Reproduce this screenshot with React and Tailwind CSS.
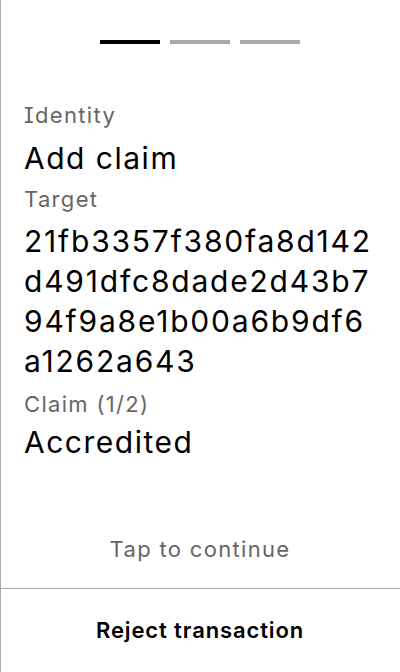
const steps = [true, false, false]

const hashLines = ['21fb3357f380fa8d142', 'd491dfc8dade2d43b7', '94f9a8e1b00a6b9df6', 'a1262a643']

export default function App() {
  return (
    <div className="h-[672px] w-[400px] bg-white border-l border-[#aaaaaa] flex flex-col font-['Inter',sans-serif] [font-feature-settings:'cv08'] text-black">
      <div className="flex justify-center gap-[10px] pt-[40px] pr-px">
        {steps.map((on, i) => (
          <div key={i} className={`h-[4px] w-[60px] ${on ? 'bg-black' : 'bg-[#aaaaaa]'}`} />
        ))}
      </div>

      <div className="flex flex-col px-[23px] pt-[57px]">
        <div className="text-[22px] leading-[28px] tracking-[0.06em] text-[#666666]">Identity</div>
        <div className="mt-[9px] text-[30px] leading-[40px] tracking-[0.05em]">Add claim</div>
        <div className="mt-[7px] text-[22px] leading-[28px] tracking-[0.06em] text-[#666666]">Target</div>
        <div className="mt-[8px] text-[30px] leading-[40px] tracking-[0.06em]">
          {hashLines.map((l) => (
            <div key={l}>{l}</div>
          ))}
        </div>
        <div className="mt-[9px] text-[22px] leading-[28px] tracking-[0.06em] text-[#666666]">Claim (1/2)</div>
        <div className="mt-[4px] text-[30px] leading-[40px] tracking-[0.05em]">Accredited</div>
      </div>

      <div className="flex-1 flex items-end justify-center pb-[25px] pr-px">
        <span className="text-[22px] leading-[28px] tracking-[0.06em] text-[#666666]">Tap to continue</span>
      </div>

      <div className="border-t border-[#aaaaaa] flex-none h-[84px] flex items-center justify-center pr-px">
        <span className="text-[22px] font-semibold tracking-[0.04em]">Reject transaction</span>
      </div>
    </div>
  )
}
